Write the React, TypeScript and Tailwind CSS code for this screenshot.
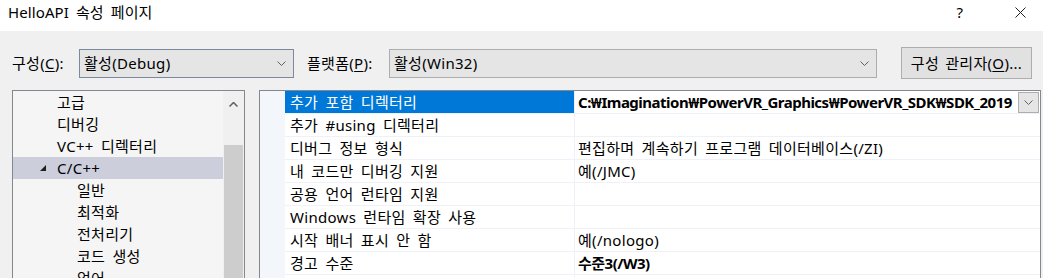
import React from 'react'

const treeItems = [
  { label: '고급', level: 1 },
  { label: '디버깅', level: 1 },
  { label: 'VC++ 디렉터리', level: 1 },
  { label: 'C/C++', level: 1, open: true, selected: true },
  { label: '일반', level: 2 },
  { label: '최적화', level: 2 },
  { label: '전처리기', level: 2 },
  { label: '코드 생성', level: 2 },
  { label: '언어', level: 2 },
]

const props = [
  { name: '추가 포함 디렉터리', value: 'C:₩Imagination₩PowerVR_Graphics₩PowerVR_SDK₩SDK_2019', bold: true, selected: true },
  { name: '추가 #using 디렉터리', value: '' },
  { name: '디버그 정보 형식', value: '편집하며 계속하기 프로그램 데이터베이스(/ZI)' },
  { name: '내 코드만 디버깅 지원', value: '예(/JMC)' },
  { name: '공용 언어 런타임 지원', value: '' },
  { name: 'Windows 런타임 확장 사용', value: '' },
  { name: '시작 배너 표시 안 함', value: '예(/nologo)' },
  { name: '경고 수준', value: '수준3(/W3)', bold: true },
  { name: '경고를 오류로 처리', value: '아니요(/WX-)' },
]

function Chevron({ className = '' }: { className?: string }) {
  return (
    <svg width="9" height="5" viewBox="0 0 9 5" className={className}>
      <path d="M0.5 0.5 L4.5 4.5 L8.5 0.5" fill="none" stroke="#606060" strokeWidth="1" />
    </svg>
  )
}

export default function App() {
  return (
    <div className="w-[1043px] h-[278px] overflow-hidden bg-[#f0f0f0] text-[15px] text-black tracking-[0.3px] [word-spacing:3px] font-['Noto_Sans','Noto_Sans_CJK_KR',sans-serif]">
      {/* title bar */}
      <div className="h-[31px] bg-white flex items-start">
        <div className="pl-[8px] pt-[1px] leading-[22px] flex-1 tracking-[0.1px]">HelloAPI 속성 페이지</div>
        <div className="w-[20px] pt-[1px] leading-[22px] text-center mr-[40px]">?</div>
        <div className="w-[20px] pt-[7px] mr-[13px] flex justify-center">
          <svg width="11" height="11" viewBox="0 0 11 11">
            <path d="M0.5 0.5 L10.5 10.5 M10.5 0.5 L0.5 10.5" stroke="#222" strokeWidth="1" />
          </svg>
        </div>
      </div>

      {/* configuration row */}
      <div className="flex items-center pl-[12px] pt-[16px] h-[48px]">
        <div className="w-[67px] shrink-0 leading-[20px]">
          구성(<span className="underline underline-offset-2">C</span>):
        </div>
        <div className="w-[215px] shrink-0 h-[29px] border border-[#7a8a9e] bg-[#e5e5e5] flex items-center pl-[4px] pr-[7px]">
          <span className="flex-1 leading-[20px]">활성(Debug)</span>
          <Chevron />
        </div>
        <div className="ml-[13px] w-[82px] shrink-0 leading-[20px]">
          플랫폼(<span className="underline underline-offset-2">P</span>):
        </div>
        <div className="w-[488px] shrink-0 h-[29px] border border-[#adadad] bg-[#e5e5e5] flex items-center pl-[4px] pr-[7px]">
          <span className="flex-1 leading-[20px]">활성(Win32)</span>
          <Chevron />
        </div>
        <div className="ml-[24px] w-[131px] shrink-0 h-[32px] border border-[#adadad] bg-[#e1e1e1] flex items-center justify-center leading-[20px] [word-spacing:2px]">
          구성 관리자(<span className="underline underline-offset-2">O</span>)...
        </div>
      </div>

      {/* panels */}
      <div className="flex mt-[11px] pl-[12px] h-[200px]">
        {/* tree */}
        <div className="w-[233px] shrink-0 border border-[#828790] border-b-0 flex bg-[#f5f5f5]">
          <div className="flex-1 min-w-0">
            {treeItems.map((it) => (
              <div
                key={it.label}
                className={`h-[22px] flex items-center leading-[20px] ${it.selected ? 'bg-[#cccedb]' : ''}`}
              >
                <div className={`shrink-0 ${it.level === 1 ? 'w-[44px]' : 'w-[64px]'}`} />
                {it.open && (
                  <svg width="8" height="8" viewBox="0 0 8 8" className="-ml-[18px] mr-[10px] shrink-0">
                    <path d="M7 1 L7 7 L1 7 Z" fill="#1e1e1e" />
                  </svg>
                )}
                <span className="whitespace-nowrap">{it.label}</span>
              </div>
            ))}
          </div>
          <div className="w-[21px] shrink-0 bg-[#f0f0f0] flex flex-col items-center">
            <div className="h-[26px] flex items-center">
              <svg width="9" height="5" viewBox="0 0 9 5">
                <path d="M0.5 4.5 L4.5 0.5 L8.5 4.5" fill="none" stroke="#606060" strokeWidth="1.5" />
              </svg>
            </div>
            <div className="mt-[28px] w-[19px] flex-1 bg-[#cdcdcd]" />
          </div>
        </div>

        {/* property grid */}
        <div className="ml-[14px] w-[782px] shrink-0 border border-[#828790] border-b-0 flex bg-white">
          <div className="w-[25px] shrink-0 bg-[#f3f6fb]" />
          <div className="flex-1 min-w-0">
            {props.map((p) => (
              <div key={p.name} className="h-[23px] flex border-b border-[#eef1f7]">
                <div
                  className={`w-[289px] shrink-0 pl-[5px] flex items-center leading-[20px] whitespace-nowrap ${
                    p.selected ? 'bg-[#0078d7] text-white' : ''
                  }`}
                >
                  {p.name}
                </div>
                <div className="flex-1 min-w-0 border-l border-[#eef1f7] flex items-center pl-[3px] overflow-hidden">
                  <span
                    className={`flex-1 min-w-0 whitespace-nowrap overflow-hidden leading-[20px] ${
                      p.bold ? 'font-bold tracking-[-0.5px]' : ''
                    }`}
                  >
                    {p.value}
                  </span>
                  {p.selected && (
                    <div className="w-[21px] h-[21px] shrink-0 border border-[#adadad] bg-[#e5e5e5] flex items-center justify-center mr-[1px]">
                      <Chevron />
                    </div>
                  )}
                </div>
              </div>
            ))}
          </div>
        </div>
      </div>
    </div>
  )
}
